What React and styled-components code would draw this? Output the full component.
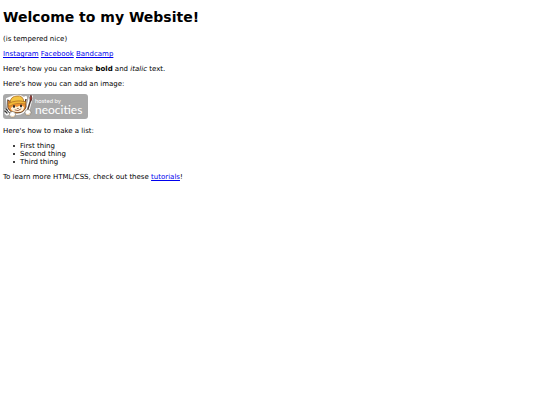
import React from "react";
import styled, { createGlobalStyle } from "styled-components";

const GlobalStyle = createGlobalStyle`
  body {
    margin: 0;
    background: #fff;
    color: #000;
    font-family: "DejaVu Sans", Verdana, sans-serif;
    font-size: 7px;
    line-height: 8px;
  }
`;

const Page = styled.main`
  padding: 9px 3px;
`;

const Title = styled.h1`
  margin: 0 0 9px;
  font-size: 14px;
  line-height: 17px;
`;

const Paragraph = styled.p`
  margin: 0 0 7px;
`;

const Link = styled.a`
  color: #0000ee;
  text-decoration: underline;
`;

const List = styled.ul`
  margin: 0 0 7px;
  padding-left: 10px;
  list-style: none;
`;

const Item = styled.li`
  display: flex;
  align-items: center;
  gap: 5px;

  &::before {
    content: "";
    width: 2px;
    height: 2px;
    border-radius: 1px;
    background: currentColor;
  }
`;

const BadgeLink = styled.a`
  display: block;
  width: 85px;
  margin: -1px 0 8px;
`;

const Badge = styled.svg`
  display: block;
  width: 85px;
  height: 25px;
`;

const BadgeText = styled.text`
  fill: #fff;
  font-family: Lato, sans-serif;
  font-size: ${({ $size }) => $size}px;
`;

function NeocitiesBadge() {
  return (
    <Badge viewBox="0 0 85 25" role="img" aria-label="Hosted by Neocities">
      <rect width="85" height="25" rx="3" fill="#a9a9a9" />
      <g strokeLinejoin="round" strokeLinecap="round">
        <path d="M3 16L8 21M3 19L5 17M6 17L4 20" stroke="#fff" strokeWidth="3" />
        <path d="M3 15L9 21M2 17L4 19M5 14L5 17" stroke="#333" strokeWidth="1.3" />
        <path d="M28 3L24 18" stroke="#fff" strokeWidth="4" />
        <path d="M28 5L24 18" stroke="#4b3c38" strokeWidth="1.5" />
        <path d="M27 6Q26 3 28 1Q30 4 28 7Z" fill="#b83832" stroke="#51302c" strokeWidth=".8" />
        <path d="M4 5L9 3Q15 0 21 4L23 3L23 14Q21 20 14 20Q6 19 5 14Z" fill="#fff" stroke="#fff" strokeWidth="2" />
        <path d="M5 6L8 8L22 8L23 5L23 13Q21 19 14 19Q7 19 5 14Z" fill="#ed9238" stroke="#51331e" strokeWidth=".9" />
        <path d="M8 14Q11 11 14 13Q18 10 21 13Q21 18 15 18Q9 18 8 15Z" fill="#fff2d9" />
        <path d="M7 8Q8 2 14 2Q20 1 21 8Q16 6 7 9Z" fill="#f4c443" stroke="#a86922" strokeWidth=".8" />
        <path d="M5 10Q12 5 23 8L22 10Q13 8 7 12Z" fill="#f3b838" stroke="#a86922" strokeWidth=".6" />
        <ellipse cx="11" cy="12.5" rx="1" ry="1.4" fill="#242321" />
        <ellipse cx="18" cy="12" rx="1" ry="1.4" fill="#242321" />
        <path d="M13.5 14L16 14L15 15Z" fill="#663b30" />
        <path d="M12 16Q15 18 18 15" fill="none" stroke="#84412f" strokeWidth=".8" />
      </g>
      <circle cx="9.5" cy="20.5" r="3" fill="#fff" stroke="#776a55" strokeWidth=".6" />
      <circle cx="25" cy="18.5" r="3" fill="#fff" stroke="#776a55" strokeWidth=".6" />
      <path d="M8 22Q10 24 12 21M23 20Q25 22 27 19" fill="none" stroke="#e8c99c" strokeWidth=".8" />
      <BadgeText x="32" y="9" $size={6}>hosted by</BadgeText>
      <BadgeText x="32" y="20" $size={12}>neocities</BadgeText>
    </Badge>
  );
}

export default function App() {
  return (
    <>
      <GlobalStyle />
      <Page>
        <Title>Welcome to my Website!</Title>
        <Paragraph>(is tempered nice)</Paragraph>
        <Paragraph>
          <Link href="#instagram">Instagram</Link>{" "}
          <Link href="#facebook">Facebook</Link>{" "}
          <Link href="#bandcamp">Bandcamp</Link>
        </Paragraph>
        <Paragraph>
          Here's how you can make <strong>bold</strong> and <em>italic</em> text.
        </Paragraph>
        <Paragraph>Here's how you can add an image:</Paragraph>
        <BadgeLink href="#neocities">
          <NeocitiesBadge />
        </BadgeLink>
        <Paragraph>Here's how to make a list:</Paragraph>
        <List>
          <Item>First thing</Item>
          <Item>Second thing</Item>
          <Item>Third thing</Item>
        </List>
        <Paragraph>
          To learn more HTML/CSS, check out these{" "}
          <Link href="#tutorials">tutorials</Link>!
        </Paragraph>
      </Page>
    </>
  );
}
